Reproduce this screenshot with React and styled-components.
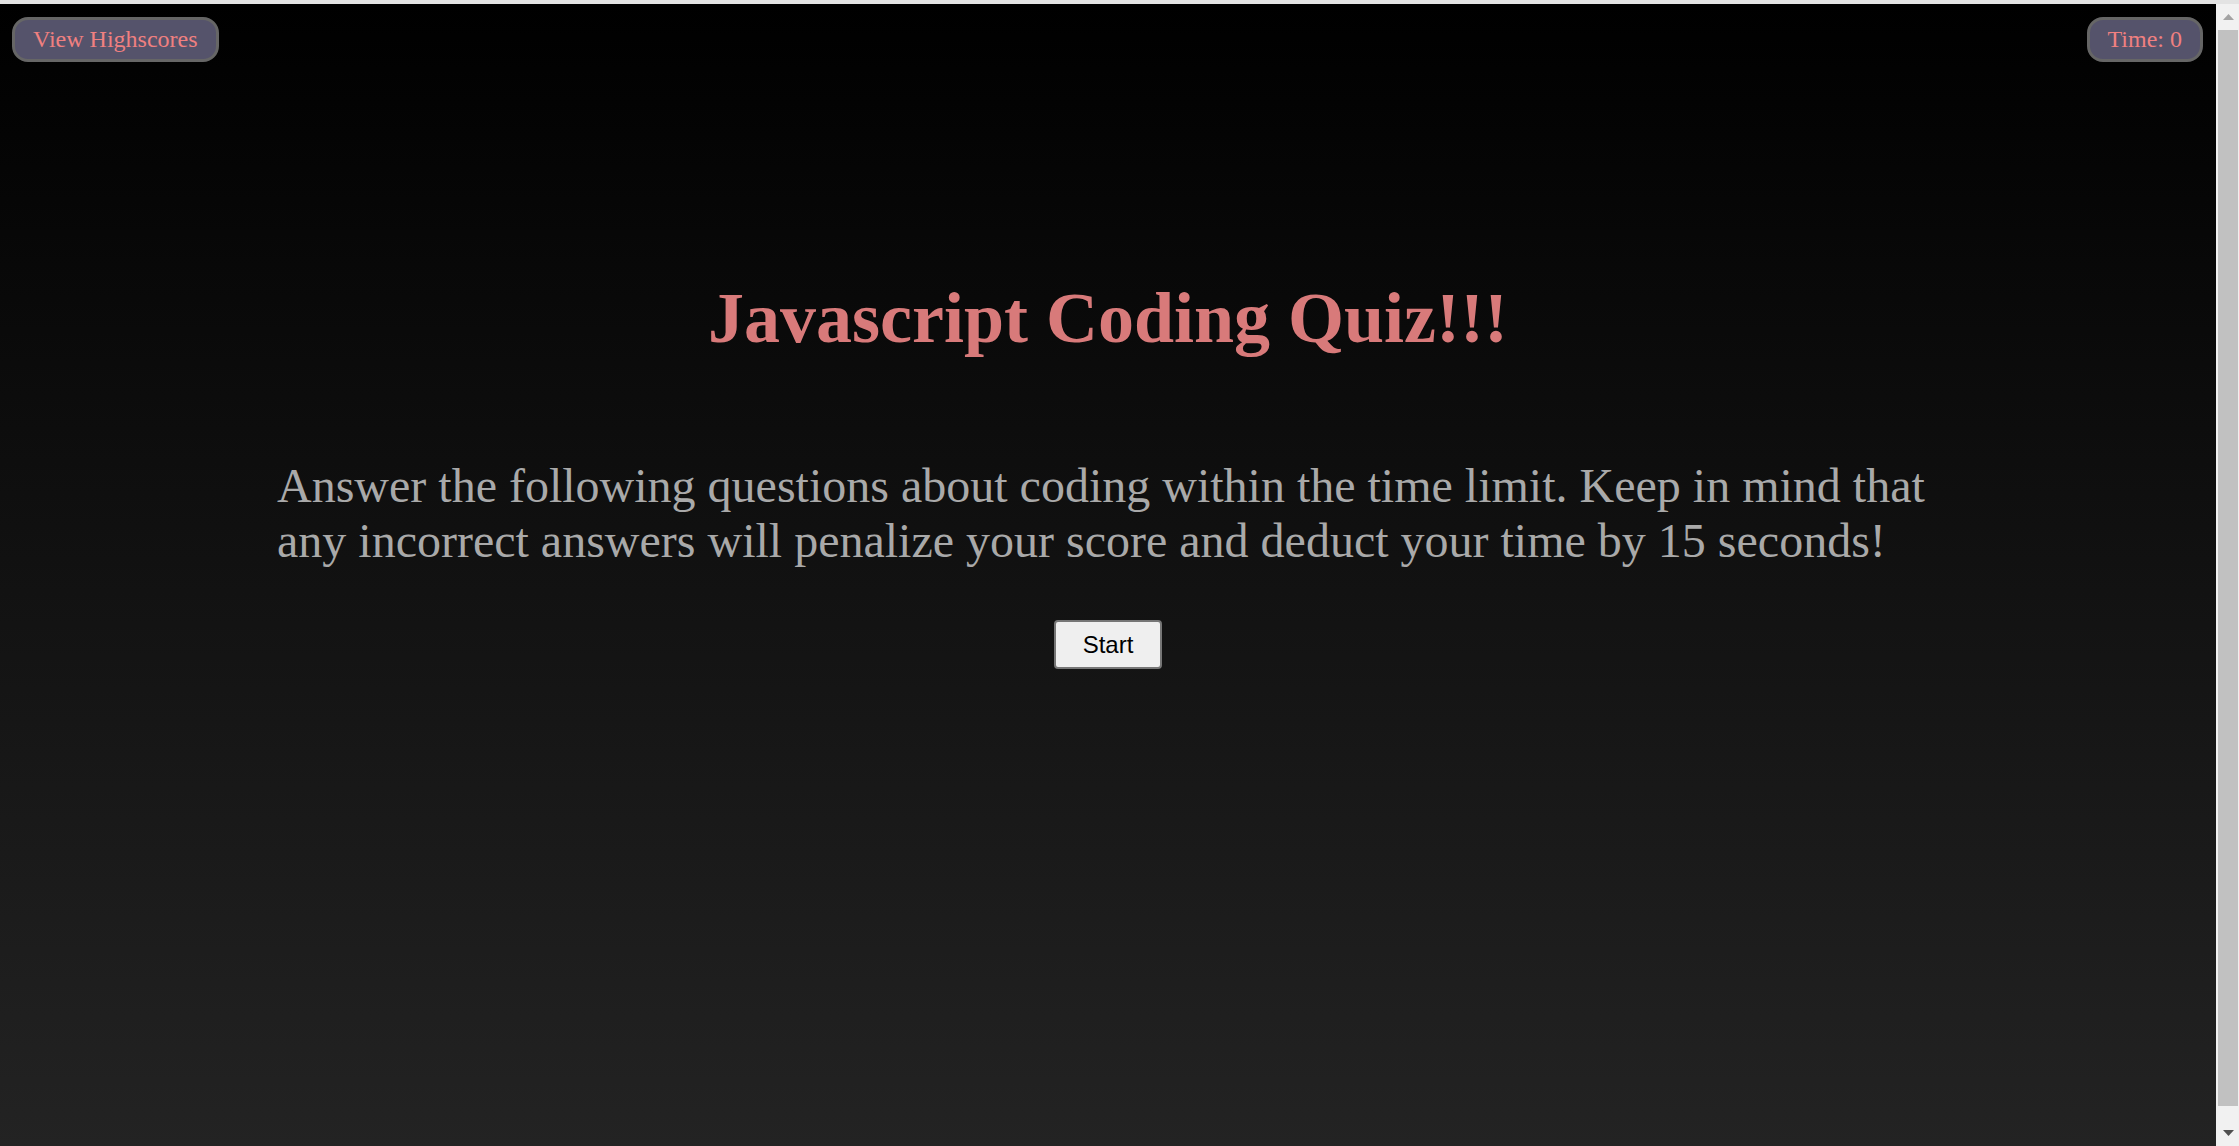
import React from 'react';
import styled, { createGlobalStyle } from 'styled-components';

const GlobalStyle = createGlobalStyle`
  html, body {
    margin: 0;
    padding: 0;
    height: 100%;
    overflow: hidden;
  }
  #root {
    height: 100%;
  }
`;

const colors = {
  coral: '#f08080',
  title: '#d87a7a',
  text: '#a9a9a9',
  pill: '#55536b',
  pillBorder: '#666666',
};

const Window = styled.div`
  display: flex;
  flex-direction: column;
  height: 100vh;
`;

const TopEdge = styled.div`
  height: 4px;
  background: #e3e3e3;
  flex: none;
`;

const Frame = styled.div`
  display: flex;
  flex: 1;
  min-height: 0;
`;

const Main = styled.main`
  flex: 1;
  display: flex;
  flex-direction: column;
  align-items: center;
  background: linear-gradient(to bottom, #000000 0%, #232323 100%);
  font-family: "Liberation Serif", "Times New Roman", serif;
`;

const Header = styled.header`
  align-self: stretch;
  display: flex;
  justify-content: space-between;
  align-items: center;
  padding: 13px 13px 0 12px;
`;

const Pill = styled.div`
  font-size: 24px;
  line-height: 27px;
  padding: 6px 18px;
  color: ${colors.coral};
  background: ${colors.pill};
  border: 3px solid ${colors.pillBorder};
  border-radius: 16px;
  cursor: ${({ clickable }) => (clickable ? 'pointer' : 'default')};
`;

const Title = styled.h1`
  margin: 215px 0 0;
  font-size: 72px;
  font-weight: bold;
  line-height: normal;
  color: ${colors.title};
`;

const Intro = styled.p`
  width: 75%;
  margin: 98px 0 0;
  font-size: 48px;
  line-height: normal;
  color: ${colors.text};
`;

const StartButton = styled.button`
  margin-top: 52px;
  font-family: "Liberation Sans", Arial, sans-serif;
  font-size: 24px;
  line-height: 27px;
  padding: 9px 27px;
  color: #000;
  background: #efefef;
  border: 2px solid #767676;
  border-radius: 4px;
  cursor: pointer;
`;

const Scrollbar = styled.div`
  width: 23px;
  flex: none;
  display: flex;
  flex-direction: column;
  background: #f1f1f1;
`;

const ScrollArrow = styled.div`
  height: 26px;
  display: flex;
  align-items: center;
  justify-content: center;
  padding-left: 1px;
`;

const Thumb = styled.div`
  flex: 1;
  margin: 0 1px 14px 2px;
  background: #c1c1c1;
`;

const Arrow = ({ up, color }) => (
  <svg width="11" height="6" viewBox="0 0 11 6">
    <polygon points={up ? '0,6 11,6 5.5,0' : '0,0 11,0 5.5,6'} fill={color} />
  </svg>
);

const App = () => (
  <>
    <GlobalStyle />
    <Window>
      <TopEdge />
      <Frame>
        <Main>
          <Header>
            <Pill clickable>View Highscores</Pill>
            <Pill>Time: 0</Pill>
          </Header>
          <Title>Javascript Coding Quiz!!!</Title>
          <Intro>
            Answer the following questions about coding within the time limit. Keep in mind that
            any incorrect answers will penalize your score and deduct your time by 15 seconds!
          </Intro>
          <StartButton>Start</StartButton>
        </Main>
        <Scrollbar>
          <ScrollArrow>
            <Arrow up color="#a3a3a3" />
          </ScrollArrow>
          <Thumb />
          <ScrollArrow>
            <Arrow color="#505050" />
          </ScrollArrow>
        </Scrollbar>
      </Frame>
    </Window>
  </>
);

export default App;
